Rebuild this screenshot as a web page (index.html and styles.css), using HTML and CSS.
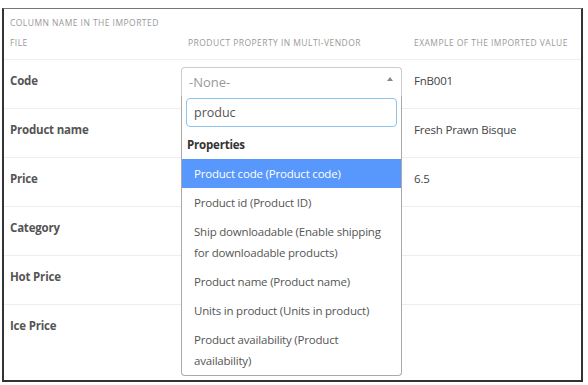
FILE: index.html
```html
<!DOCTYPE html>
<html lang="en">
  <head>
    <meta charset="UTF-8" />
    <title>Import fields mapping</title>
    <link rel="stylesheet" href="styles.css">
  </head>
  <body>
    <div class="frame">
      <table class="mapping">
        <thead>
          <tr>
            <th class="col-name">Column name in the imported file</th>
            <th class="col-prop">Product property in Multi-Vendor</th>
            <th class="col-example">Example of the imported value</th>
          </tr>
        </thead>
        <tbody>
          <tr>
            <td class="field">Code</td>
            <td>
              <div class="select open">
                <div class="select-box">
                  <span class="placeholder">-None-</span>
                  <span class="arrow"></span>
                </div>
                <div class="dropdown">
                  <div class="search-wrap">
                    <input class="search" type="text" value="produc" />
                  </div>
                  <div class="group-label">Properties</div>
                  <ul class="results">
                    <li class="option highlighted">Product code (Product code)</li>
                    <li class="option">Product id (Product ID)</li>
                    <li class="option">Ship downloadable (Enable shipping for downloadable products)</li>
                    <li class="option">Product name (Product name)</li>
                    <li class="option">Units in product (Units in product)</li>
                    <li class="option">Product availability (Product availability)</li>
                  </ul>
                </div>
              </div>
            </td>
            <td class="example">FnB001</td>
          </tr>
          <tr>
            <td class="field">Product name</td>
            <td></td>
            <td class="example">Fresh Prawn Bisque</td>
          </tr>
          <tr>
            <td class="field">Price</td>
            <td></td>
            <td class="example">6.5</td>
          </tr>
          <tr>
            <td class="field">Category</td>
            <td></td>
            <td class="example"></td>
          </tr>
          <tr>
            <td class="field">Hot Price</td>
            <td></td>
            <td class="example"></td>
          </tr>
          <tr>
            <td class="field">Ice Price</td>
            <td></td>
            <td class="example"></td>
          </tr>
        </tbody>
      </table>
    </div>
  </body>
</html>
```

FILE: styles.css
```css
html {
  box-sizing: border-box;
}

*,
*::before,
*::after {
  margin: 0;
  padding: 0;
  box-sizing: inherit;
}

body {
  margin: 0;
  font-family: "Open Sans", "Noto Sans", sans-serif;
  font-size: 11.5px;
  letter-spacing: -0.2px;
  color: #555;
  background: #fff;
}

.frame {
  margin: 8px 0 0 2px;
  width: 581px;
  height: 374px;
  border: 2px solid #333;
  border-top: 1px solid #777;
  box-shadow: 0 2px 0 #c8c8c8;
  overflow: hidden;
}

.mapping {
  width: 100%;
  border-collapse: collapse;
  table-layout: fixed;
}

.mapping th {
  text-align: left;
  vertical-align: bottom;
  font-weight: normal;
  font-size: 8.5px;
  line-height: 20px;
  letter-spacing: 0.45px;
  text-transform: uppercase;
  color: #999;
  padding: 4px 6px 6px;
  border-bottom: 1px solid #eee;
}

.mapping .col-name {
  width: 178px;
}

.mapping .col-prop {
  width: 226px;
}

.mapping td {
  height: 49px;
  vertical-align: top;
  padding: 11px 6px 0;
  line-height: 20px;
  border-top: 1px solid #eee;
}

.mapping tbody tr:first-child td {
  border-top: none;
}

.mapping .field {
  font-weight: 700;
  color: #555;
}

.mapping .example {
  color: #444;
}

/* select2-like dropdown */
.select {
  position: relative;
  width: 221px;
  margin: -4px 0 0 -7px;
}

.select-box {
  display: flex;
  align-items: center;
  justify-content: space-between;
  height: 29px;
  padding: 0 8px 0 7px;
  border: 1px solid #ccc;
  border-bottom: none;
  border-radius: 4px 4px 0 0;
  background: #fff;
}

.placeholder {
  font-size: 13px;
  letter-spacing: 0;
  color: #999;
}

.arrow {
  width: 0;
  height: 0;
  margin-top: -6px;
  border-style: solid;
  border-width: 0 3px 4px;
  border-color: transparent transparent #888;
}

.dropdown {
  position: absolute;
  top: 100%;
  left: 0;
  width: 221px;
  z-index: 10;
  background: #fff;
  border: 1px solid #aaa;
  border-top: none;
  border-radius: 0 0 4px 4px;
}

.search-wrap {
  padding: 2px 4px 0;
}

.search {
  display: block;
  width: 100%;
  height: 29px;
  padding: 0 7px;
  font: inherit;
  font-size: 12.5px;
  letter-spacing: 0;
  color: #555;
  border: 1px solid #8cc4f0;
  border-radius: 4px;
  outline: none;
}

.group-label {
  padding: 7px 5px 4px;
  line-height: 21px;
  font-weight: 700;
  color: #333;
}

.results {
  list-style: none;
}

.option {
  padding: 4px 12px;
  line-height: 21px;
  color: #555;
}

.option.highlighted {
  background: #5897fb;
  color: #fff;
}
```
